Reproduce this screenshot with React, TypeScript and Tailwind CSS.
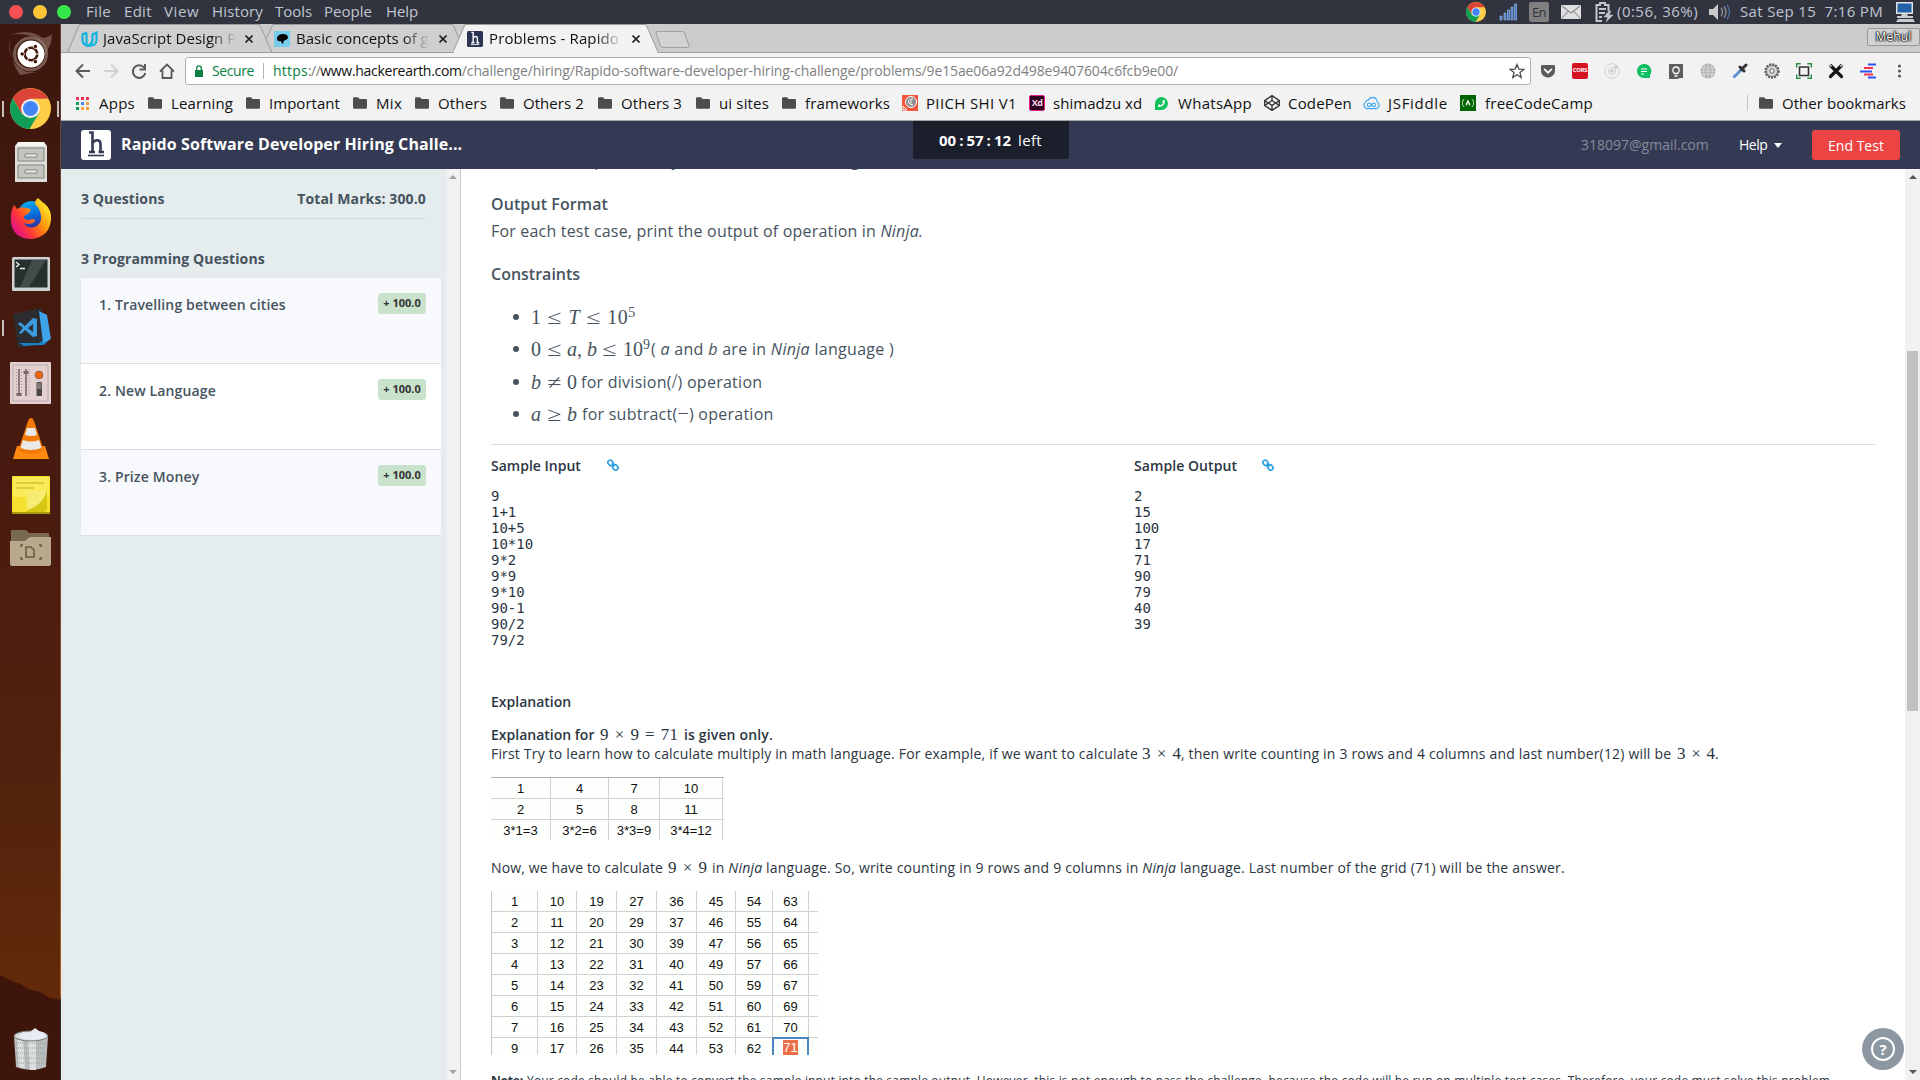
import React from "react";
import { FaGetPocket, FaFreeCodeCamp, FaUbuntu, FaCodepen, FaPhoneAlt } from "react-icons/fa";

function ChromeLogo({ className }: { className: string }) {
  return (
    <svg viewBox="0 0 40 40" className={className}>
      <circle cx="20" cy="20" r="20" fill="#ffcd46" />
      <path d="M2.7 10A20 20 0 0 1 37.3 10.5H20L11.5 25Z" fill="#db4437" />
      <path d="M2.7 10A20 20 0 0 0 19 40L28.5 24.5 20 29 11.5 25Z" fill="#0f9d58" />
      <circle cx="20" cy="20" r="9.2" fill="#f1f1f1" />
      <circle cx="20" cy="20" r="7.3" fill="#4285f4" />
    </svg>
  );
}

function HLogo({ className, bg, fg }: { className: string; bg: string; fg: string }) {
  return (
    <svg viewBox="0 0 30 30" className={className}>
      <rect width="30" height="30" rx="3" fill={bg} />
      <path d="M8 2.5h3.500V21.500M8 22h6M12 12.500c2-3.500 7.500-3 7.500 1.500V21.500M17.500 22h5.500" fill="none" stroke={fg} strokeWidth="2.600" />
      <path d="M7 25.500h16" stroke={fg} strokeWidth="1.600" />
    </svg>
  );
}

function Folder() {
  return (
    <svg viewBox="0 0 14 12" className="h-3 w-3.5">
      <path d="M0 1.500Q0 .3 1.200.3H5L6.600 2H12.800Q14 2 14 3.200V10.500Q14 11.700 12.800 11.700H1.200Q0 11.700 0 10.500Z" fill="#4d4d4d" />
    </svg>
  );
}

const menus: [string, string][] = [
  ["File", "w-[38px] tracking-[0.3px]"],
  ["Edit", "w-[40px] tracking-[0.3px]"],
  ["View", "w-[48px] tracking-[0.6px]"],
  ["History", "w-[63px] tracking-[0.14px]"],
  ["Tools", "w-[49px]"],
  ["People", "w-[62px]"],
  ["Help", "w-[40px] tracking-[-0.1px]"],
];

function MenuBar() {
  return (
    <div className="flex h-6 shrink-0 items-center bg-[#31343f] text-[15px] leading-6 text-[#bfc4d0]">
      <div className="flex w-[86px] shrink-0 gap-[10px] pl-[9px]">
        <i className="size-3.5 rounded-full bg-[#f94f57]" />
        <i className="size-3.5 rounded-full bg-[#fcc436]" />
        <i className="size-3.5 rounded-full bg-[#35e84b]" />
      </div>
      {menus.map(([t, cls]) => (
        <div key={t} className={`${cls} mt-[-2px] shrink-0 whitespace-nowrap`}>{t}</div>
      ))}
      <div className="ml-auto flex items-center">
        <ChromeLogo className="h-5 w-5" />
        <svg viewBox="0 0 18 18" className="ml-[13px] mr-[12px] h-[18px] w-[18px]">
          <path d="M1 13h2v4H1zM5 10h2v7H5zM8.500 7h2v10h-2zM12 4h2v13h-2zM15.500 1h2v16h-2z" fill="#3f78c8" stroke="#a9c6ee" strokeWidth=".6" />
        </svg>
        <span className="flex h-5 w-5 items-center justify-center rounded-[2px] bg-[#808080] text-[13px] tracking-[-0.5px] text-[#31343f]">En</span>
        <svg viewBox="0 0 20 14" className="ml-3 h-[14px] w-5">
          <rect width="20" height="14" rx="1" fill="#e0e0e0" />
          <path d="M1 1l9 7 9-7M1 13l6.500-7M19 13l-6.500-7" fill="none" stroke="#8a8d94" strokeWidth="1.100" />
        </svg>
        <svg viewBox="0 0 20 22" className="ml-[13px] h-[22px] w-5" fill="none" stroke="#c4c6cb" strokeWidth="2">
          <path d="M8 20H2.500V4H6V2h5v2h3.500v6M5 8h7M5 12h6M5 16h3" />
          <path d="M15 10l-5 6h4l-2 5 7-7h-4l2-4z" fill="#c4c6cb" strokeWidth=".5" />
        </svg>
        <span className="ml-[3px] mt-[-2px] w-[92px] whitespace-nowrap tracking-[0.47px]">(0:56, 36%)</span>
        <svg viewBox="0 0 22 18" className="h-[18px] w-[22px]">
          <path d="M0 6h4l5-5v16l-5-5H0z" fill="#c9c9c9" />
          <path d="M12 5q3 4 0 8M15 3.500q4 5.500 0 11" fill="none" stroke="#8e949e" strokeWidth="1.300" />
          <path d="M18 2q5 7 0 14" fill="none" stroke="#4a6da8" strokeWidth="1.300" />
        </svg>
        <span className="ml-[9px] mt-[-2px] w-[155px] whitespace-pre tracking-[0.34px]">Sat Sep 15  7:16 PM</span>
        <svg viewBox="0 0 20 22" className="mr-[5px] h-[22px] w-5">
          <rect x="1" y="1" width="17" height="12" fill="#dfe3e6" />
          <rect x="2.500" y="2.500" width="14" height="9" fill="#2061a8" />
          <path d="M7 13h5l1 2h5v2H2v-2h4zM3 18h15l2 3H1z" fill="#c9cdd0" />
        </svg>
      </div>
    </div>
  );
}

function Wallpaper() {
  return (
    <svg viewBox="0 0 61 1056" className="absolute inset-0 h-full w-full" preserveAspectRatio="none">
      <defs>
        <linearGradient id="wall" x1="0" y1="0" x2="0" y2="1">
          <stop offset="0" stopColor="#3d160d" />
          <stop offset=".5" stopColor="#4b1c10" />
          <stop offset=".75" stopColor="#54230d" />
          <stop offset=".9" stopColor="#62290a" />
        </linearGradient>
        <linearGradient id="edge" x1="0" y1="0" x2="0" y2="1">
          <stop offset="0" stopColor="#5c4039" />
          <stop offset=".6" stopColor="#7d4a30" />
          <stop offset=".92" stopColor="#a8641a" />
          <stop offset=".925" stopColor="#333" />
        </linearGradient>
      </defs>
      <rect width="61" height="1056" fill="url(#wall)" />
      <path d="M0 951l12 6 8 3 8 5 12 3 10 6 11 2v80H0z" fill="#3d150b" />
      <rect x="60" width="1" height="1056" fill="url(#edge)" />
    </svg>
  );
}

function Launcher() {
  return (
    <div className="relative h-[1056px] w-[61px] shrink-0">
      <Wallpaper />
      <div className="relative flex h-full flex-col items-center">
        <div className="mt-[7px] flex h-[45px] w-[45px] items-center justify-center">
          <svg viewBox="0 0 45 45" className="absolute h-[45px] w-[45px]" fill="none">
            <path d="M2 4Q14 1 26 6 38 12 37 24L43 12 44 3Q36 10 30 4 18-2 2 4zM1 8Q0 24 8 34 16 43 30 41L12 44Q2 30 1 8z" fill="#8a6a60" opacity=".7" />
            <circle cx="22.500" cy="23" r="16" stroke="#a08880" strokeWidth="3" opacity=".6" />
          </svg>
          <FaUbuntu className="relative size-7 rounded-full bg-[#431a0f] text-white" />
        </div>
        <div className="mt-[12px] flex w-full items-center justify-between px-[2px]">
          <i className="h-4 w-[2px] bg-[#c8bfbc]" />
          <ChromeLogo className="h-[41px] w-[41px]" />
          <i className="h-4 w-[2px] bg-[#c8bfbc]" />
        </div>
        <svg viewBox="0 0 32 42" className="mt-[12px] h-[42px] w-8">
          <path d="M3 1h26l3 4v36H0V5z" fill="#dcdcd8" />
          <path d="M3 1h26l2 4H1z" fill="#f5f5f3" />
          <path d="M3 7h26v13H3zM3 24h26v13H3z" fill="#c5c5c0" stroke="#85857f" strokeWidth="1" />
          <path d="M10 13h12v3H10zM10 29h12v3H10z" fill="#eee" stroke="#85857f" strokeWidth="1" />
        </svg>
        <svg viewBox="0 0 42 42" className="mt-[15px] h-[42px] w-[42px]">
          <defs>
            <linearGradient id="fox" x1=".1" y1=".8" x2=".9" y2=".2">
              <stop offset="0" stopColor="#e31587" />
              <stop offset=".3" stopColor="#ff3a33" />
              <stop offset=".65" stopColor="#ff9a0b" />
              <stop offset="1" stopColor="#ffe226" />
            </linearGradient>
            <linearGradient id="globe" x1="0" y1="0" x2=".3" y2="1">
              <stop offset="0" stopColor="#06b7f5" />
              <stop offset=".6" stopColor="#0967d8" />
              <stop offset="1" stopColor="#3a2a95" />
            </linearGradient>
          </defs>
          <circle cx="22" cy="18" r="15" fill="url(#globe)" />
          <path d="M4 7l3 4q4-3 9-1l5 1-2 4-5 3q0 4 4 4l6-1q2 2-1 4-5 2-9 0 3 6 10 4 8-2 7-11-1-8-6-12 0-4 3-6 4 4 7 6 7 6 6 16-2 17-19 19Q3 41 1 24 0 14 4 7z" fill="url(#fox)" />
        </svg>
        <svg viewBox="0 0 38 34" className="mt-[17px] h-[34px] w-[38px]">
          <rect width="38" height="34" rx="1.500" fill="#cfd3d3" />
          <rect x="2.500" y="2.500" width="33" height="28" fill="#26302e" />
          <path d="M20 3h14L17 30H8z" fill="#53605d" opacity=".6" />
          <path d="M4 5l3 2.500L4 10M8 11.500h5" fill="none" stroke="#e8ecec" strokeWidth="1.300" />
        </svg>
        <div className="mt-[17px] flex w-full items-center pl-[2px]">
          <i className="h-4 w-[2px] bg-[#c8bfbc]" />
          <svg viewBox="0 0 38 40" className="ml-[9px] h-10 w-[38px]">
            <path d="M0 6l28-6 3 36-26 4z" fill="#2d2d31" />
            <path d="M6 35l20 0 3-2 8-2-6 6q-10 0-20 1z" fill="#1c7fc8" />
            <path d="M26 3l8 4 4 24-8 4z" fill="#3fa3ea" />
            <path d="M7 14l5 4 8-8 4 1v17l-4 1-8-7-4 4-2-1 4-5-5-4zM20 16l-5 4 5 4z" fill="#3c9be0" fillRule="evenodd" />
          </svg>
        </div>
        <svg viewBox="0 0 41 42" className="mt-[14px] h-[42px] w-[41px]">
          <rect width="41" height="42" rx="1" fill="#e3cfd0" />
          <rect x="3" y="3" width="35" height="36" fill="none" stroke="#bfa9ab" />
          <path d="M9 7v27M16 7v27" stroke="#6f6264" strokeWidth="1.500" />
          <path d="M6.500 7v27M11.500 7v27M19 7v27" stroke="#a39394" strokeDasharray="1 2" />
          <path d="M6.500 31h5v3h-5zM13.500 9h5v3h-5z" fill="#77696b" />
          <circle cx="29" cy="13" r="3.800" fill="#f76707" stroke="#8a5a44" />
          <rect x="26.500" y="20" width="5.500" height="14" rx="1" fill="#4c4647" />
          <rect x="27" y="21" width="4.500" height="6" fill="#7f797a" />
        </svg>
        <svg viewBox="0 0 38 42" className="mt-[14px] h-[42px] w-[38px]">
          <path d="M5 28h28l4 13H1z" fill="#ff8a0f" />
          <path d="M19 0q2 0 3 3l10 30q-13 6-26 0L16 3q1-3 3-3z" fill="#f47a08" />
          <path d="M15 10h8l2 7q-6 2-12 0zM11 22q8 3 16 0l2.500 8q-10.500 4-21 0z" fill="#e9e9e9" />
        </svg>
        <svg viewBox="0 0 38 38" className="mt-[16px] h-[38px] w-[38px]">
          <rect width="38" height="38" rx="1" fill="#f5e12d" />
          <rect x="1" y="1" width="36" height="20" fill="#fbf06a" opacity=".7" />
          <path d="M4 7h28M4 12h18" stroke="#cfc13e" strokeWidth="1.500" />
          <path d="M14 36Q22 30 15 16q12 4 20-2v19l-3 3z" fill="#d6c713" />
          <path d="M15 34Q30 30 35 15V15H15z" fill="#f7ec72" />
          <path d="M0 36h38v2H0z" fill="#a89a08" />
        </svg>
        <svg viewBox="0 0 41 37" className="mt-[15px] h-[37px] w-[41px]">
          <path d="M1 1h15l3 3h20v12H1z" fill="#7b6a53" />
          <path d="M0 12h15l5-4h21v27q0 2-2 2H2q-2 0-2-2z" fill="#b9a88c" />
          <path d="M16 18h5l3 3v7h-8zM11 18v-2h2M11 28v2h2M29 16h2v2M29 30h2v-2" fill="none" stroke="#6b5a43" strokeWidth="1.500" />
        </svg>
        <svg viewBox="0 0 36 44" className="mt-auto mb-[9px] h-[44px] w-9">
          <path d="M1 9h34l-2 31q-15 6-30 0z" fill="#b9bcbd" />
          <path d="M4 12h6l2 29-6-1zM15 12h8v31h-6z" fill="#dcdfe0" />
          <path d="M3 16h30M3 21h30M3 26h30M4 31h28M4 36h28" stroke="#8f9394" strokeWidth=".8" strokeDasharray="1 1" />
          <ellipse cx="18" cy="9" rx="17" ry="5" fill="#d9dcdd" stroke="#75797a" />
          <path d="M5 10l5-5 6 1 6-5 4 3 6 2 1 4q-14 6-28 0z" fill="#e6ebf5" />
        </svg>
      </div>
    </div>
  );
}

function Fade({ children }: { children: React.ReactNode }) {
  return (
    <span className="mt-[-2px] w-[134px] shrink-0 overflow-hidden whitespace-nowrap mask-[linear-gradient(to_right,black_80%,transparent)]">
      {children}
    </span>
  );
}

function Close() {
  return (
    <svg viewBox="0 0 8 8" className="h-2 w-2">
      <path d="M.5.5l7 7M7.500.5l-7 7" stroke="#222" strokeWidth="1.600" />
    </svg>
  );
}

function TabStrip() {
  return (
    <div className="relative h-[29px] shrink-0 bg-[#cbcbcb] text-[15px] leading-[28px] text-[#111]">
      <svg viewBox="0 0 1859 29" className="absolute inset-0 h-[29px] w-[1859px]">
        <path d="M0 28.500H1859" stroke="#a0a0a0" />
        <path d="M6.500 28.500L18.500.5H198.500L211.500 28.500z" fill="#cfcfcf" stroke="#9a9a9a" />
        <path d="M205 15L212 .5H392L404 28.500H211z" fill="#cfcfcf" stroke="#9a9a9a" />
        <path d="M391.500 29L404 .5H585L597.500 29z" fill="#f2f2f2" stroke="#9a9a9a" />
        <path d="M393 28.500H596.500" stroke="#f2f2f2" strokeWidth="2" />
        <path d="M595 9q-.5-1.500 1.500-1.500H621q2 0 2.500 1.500l4.500 12.500q.5 2-1.500 2H602q-2 0-2.500-1.500z" fill="#d3d3d3" stroke="#a0a0a0" />
      </svg>
      <div className="relative flex h-7 items-center pt-[2px]">
        <svg viewBox="0 0 17 16" className="ml-5 h-4 w-[17px] shrink-0" fill="none" stroke="#12b5e0" strokeWidth="2.200">
          <path d="M5.500 1.500L1.500 3.500V9q0 3.500 4 5.500V1.500M5.500 14.500q2 .8 4-.6" />
          <path d="M15.500 1.500L11.500 3.500V9q0 3-3.500 5.500 7.500.5 7.500-5.500z" />
        </svg>
        <span className="w-[5px]" />
        <Fade><span className="tracking-[0.05px]">JavaScript Design Pa</span></Fade>
        <span className="w-2" />
        <Close />
        <svg viewBox="0 0 16 16" className="ml-[21px] size-4">
          <rect width="16" height="16" fill="#76cdeb" />
          <path d="M3 7q1-4 6-4 5 0 5 4-1 2-3 2-2 1-2 4-2-1-2-3-4 1-4-3z" fill="#000" />
        </svg>
        <span className="w-[6px]" />
        <Fade>Basic concepts of g</Fade>
        <span className="w-[9px]" />
        <Close />
        <HLogo className="ml-[20px] size-4" bg="#2c3454" fg="#fff" />
        <span className="w-[6px]" />
        <Fade><span className="tracking-[0.12px]">Problems - Rapido</span></Fade>
        <span className="w-[9px]" />
        <Close />
        <span className="ml-auto mt-[-4px] flex h-[18px] w-[53px] items-center justify-center rounded-[2px] border border-[#999] bg-[#d2d2d2] text-[12px] tracking-[0.14px] text-white [text-shadow:0_0_1px_#000,0_0_1px_#000,0_0_2px_#000,0_0_2px_#000]">Mehul</span>
      </div>
    </div>
  );
}

function Toolbar() {
  return (
    <div className="flex h-[35px] shrink-0 items-center">
      <svg viewBox="0 0 102 18" className="ml-[13px] h-[18px] w-[102px]" fill="none" stroke="#5a5a5a" strokeWidth="2">
        <path d="M16 9H3M9 2.500L2.500 9 9 15.500" />
        <path d="M30 9h13M37 2.500L43.500 9 37 15.500" stroke="#d0d0d0" />
        <path d="M70 5.500A6.300 6.300 0 1 0 71.300 11M71 2v5.500h-5.500" />
        <path d="M86 9.500L93 2.500l7 7M88.500 8.500V16h9V8.500" strokeWidth="1.800" />
      </svg>
      <div className="ml-[9px] flex h-7 w-[1346px] shrink-0 items-center rounded-[3px] border border-[#b0b0b0] bg-white text-[14px]">
        <svg viewBox="0 0 8 12" className="ml-[9px] h-3 w-2">
          <path d="M0 5h8v7H0z" fill="#0b8043" />
          <path d="M1.700 5V3q0-2.200 2.300-2.200T6.300 3v2" fill="none" stroke="#0b8043" strokeWidth="1.300" />
        </svg>
        <span className="ml-[9px] w-[51px] tracking-[-0.4px] text-[#0b8043]">Secure</span>
        <i className="mr-[9px] h-4 w-px bg-[#b5b5b5]" />
        <span className="whitespace-nowrap text-[#808080]">
          <span className="tracking-[0.24px] text-[#0b8043]">https</span>
          <span className="tracking-[-0.6px]">://</span>
          <span className="tracking-[-0.28px] text-[#111]">www.hackerearth.com</span>
          <span className="tracking-[-0.12px]">/challenge/hiring/Rapido-software-developer-hiring-challenge/problems/9e15ae06a92d498e9407604c6fcb9e00/</span>
        </span>
        <svg viewBox="0 0 16 16" className="ml-auto mr-[5px] size-4" fill="none" stroke="#4a4a4a" strokeWidth="1.300">
          <path d="M8 1.500l1.900 4.600 4.900.3-3.800 3.200 1.200 4.900L8 11.800l-4.200 2.700L5 9.600 1.200 6.400l4.900-.3z" />
        </svg>
      </div>
      <div className="ml-[9px] flex gap-4">
        <FaGetPocket className="size-4 text-[#5a5a5a]" />
        <span className="flex size-4 items-center justify-center rounded-[2px] bg-[#d5121f] text-[6px] font-bold tracking-[-0.3px] text-white">CORS</span>
        <svg viewBox="0 0 16 16" className="size-4" fill="none" stroke="#d2d2d2">
          <circle cx="8" cy="8" r="7.300" /><circle cx="8" cy="8" r="3.500" /><circle cx="8" cy="8" r="1.500" fill="#ccc" /><circle cx="12" cy="4" r="1.500" fill="#ccc" />
        </svg>
        <svg viewBox="0 0 16 16" className="size-4"><path d="M8 1a7 7 0 0 0 0 14h6V12A7 7 0 0 0 8 1z" fill="#0dbe65" /><path d="M5 6h6M5 8.500h6M5 11h3" stroke="#fff" strokeWidth="1.200" /></svg>
        <svg viewBox="0 0 16 16" className="size-4"><path d="M1 1h14v14h-3l-3 1H1z" fill="#5d5d5d" /><path d="M6.500 10.500Q4.800 9 4.800 7.200a3.200 3.200 0 0 1 6.400 0Q11.200 9 9.500 10.500zM6.500 13h3" fill="none" stroke="#fff" strokeWidth="1.300" /></svg>
        <svg viewBox="0 0 16 16" className="size-4"><circle cx="8" cy="8" r="7.500" fill="#b2b2b2" /><path d="M1 5h14M.5 8h15M1 11h14M8 .5v15M4.500 1.500q-2 6.500 0 13M11.500 1.500q2 6.500 0 13" fill="none" stroke="#dedede" strokeWidth=".8" /></svg>
        <svg viewBox="0 0 16 16" className="size-4"><path d="M1.500 14.500L9 7" stroke="#5b93d6" strokeWidth="3" /><path d="M8 4l4 4M9.500 6.500L14 2" stroke="#333" strokeWidth="3" strokeLinecap="round" /></svg>
        <svg viewBox="0 0 16 16" className="size-4"><circle cx="8" cy="8" r="6.500" fill="#c9c9c9" stroke="#5c5c5c" strokeWidth="2.400" strokeDasharray="2 1" /><circle cx="8" cy="8" r="5.500" fill="#d8d8d8" stroke="#777" /><circle cx="8" cy="8" r="2.200" fill="#f2f2f2" stroke="#666" /></svg>
        <svg viewBox="0 0 16 16" className="size-4" fill="none"><path d="M.7 4.500V.7h4M11.300.7h4v3.800M15.300 11.500v3.800h-4M4.700 15.300h-4v-3.800" stroke="#2a9040" strokeWidth="1.400" /><path d="M3.500 4h9v8.500h-9z" stroke="#333" strokeWidth="1.600" /></svg>
        <svg viewBox="0 0 16 16" className="size-4"><path d="M2.500 2.500l11 11M13.500 2.500l-11 11" stroke="#151515" strokeWidth="3.200" strokeLinecap="round" /><path d="M0 0l3.500 3.500M12.500 3.500L16 0" stroke="#f2f2f2" strokeWidth="1.400" /></svg>
        <svg viewBox="0 0 16 16" className="size-4" strokeWidth="2"><path d="M8 1.500h8M0 8.500h12M8 14.500h8" stroke="#2a54f5" /><path d="M4 5h9M4 11.500h9" stroke="#f5334e" /></svg>
        <svg viewBox="0 0 16 16" className="size-4" fill="#5a5a5a"><circle cx="7.500" cy="3" r="1.600" /><circle cx="7.500" cy="8" r="1.600" /><circle cx="7.500" cy="13" r="1.600" /></svg>
      </div>
    </div>
  );
}

const appDots = ["#f5334e", "#f5334e", "#f5334e", "#0f9d58", "#4285f4", "#fa9d3a", "#0f9d58", "#fa9d3a", "#fa9d3a"];

function AppsIcon() {
  return (
    <svg viewBox="0 0 13 13" className="size-[13px]">
      {appDots.map((c, i) => (
        <rect key={i} x={(i % 3) * 5} y={Math.floor(i / 3) * 5} width="3" height="3" fill={c} />
      ))}
    </svg>
  );
}

const bookmarks: { label: string; w: string; cell: string; icon: React.ReactNode }[] = [
  { label: "Apps", w: "w-[72px] tracking-[0.25px]", cell: "w-[23px]", icon: <AppsIcon /> },
  { label: "Learning", w: "w-[98px] tracking-[0.12px]", cell: "w-[23px]", icon: <Folder /> },
  { label: "Important", w: "w-[107px] tracking-[0.04px]", cell: "w-[23px]", icon: <Folder /> },
  { label: "Mix", w: "w-[62px] tracking-[0.3px]", cell: "w-[23px]", icon: <Folder /> },
  { label: "Others", w: "w-[85px] tracking-[0.18px]", cell: "w-[23px]", icon: <Folder /> },
  { label: "Others 2", w: "w-[98px] tracking-[0.05px]", cell: "w-[23px]", icon: <Folder /> },
  { label: "Others 3", w: "w-[98px] tracking-[0.07px]", cell: "w-[23px]", icon: <Folder /> },
  { label: "ui sites", w: "w-[86px] tracking-[0.16px]", cell: "w-[23px]", icon: <Folder /> },
  { label: "frameworks", w: "w-[120px] tracking-[0.14px]", cell: "w-[23px]", icon: <Folder /> },
  {
    label: "PIICH SHI V1", w: "w-[127px] tracking-[0.35px]", cell: "w-[24px]",
    icon: <svg viewBox="0 0 16 16" className="size-4"><rect width="16" height="16" fill="#f4553d" /><circle cx="9" cy="7" r="5.500" fill="#8b8b8b" stroke="#fff" /><path d="M11 4Q6 4 6.500 7T11 10M9 5.500v3M1 11l4 4H1z" stroke="#fff" fill="none" /></svg>,
  },
  {
    label: "shimadzu xd", w: "w-[125px] tracking-[0.05px]", cell: "w-[24px]",
    icon: <span className="flex size-4 items-center justify-center rounded-[2px] border border-[#e0218a] bg-[#2e001e] text-[9px] font-bold tracking-[-0.5px] text-[#ffd9ec]">Xd</span>,
  },
  {
    label: "WhatsApp", w: "w-[110px] tracking-[0.29px]", cell: "w-[24px]",
    icon: <span className="ml-px flex size-[13px] items-center justify-center rounded-full rounded-bl-[3px] bg-[#12c15a]"><FaPhoneAlt className="size-[7px] -scale-x-100 text-white" /></span>,
  },
  { label: "CodePen", w: "w-[99px] tracking-[0.18px]", cell: "w-[24px]", icon: <FaCodepen className="size-4 text-[#333]" /> },
  {
    label: "JSFiddle", w: "w-[97px] tracking-[0.7px]", cell: "w-[25px]",
    icon: <svg viewBox="0 0 18 14" className="h-[14px] w-[17px]" fill="none" stroke="#3fa9f0" strokeWidth="1.200"><path d="M4 13Q1 12 1 9.500T3 6q0-2 2.500-2Q7 1 10 1q5 .5 5 5 2 1 2 3.500T14 13z" /><path d="M9 9Q7.500 7 6 7.200T4.500 9 6 10.800 9 9q1.500-2 3-1.800T13.500 9 12 10.800 9 9z" /></svg>,
  },
  {
    label: "freeCodeCamp", w: "w-[287px] tracking-[0.25px]", cell: "w-[25px]",
    icon: <span className="flex size-4 items-center justify-center bg-[#006400]"><FaFreeCodeCamp className="size-3 text-white" /></span>,
  },
];

function BookmarkBar() {
  return (
    <div className="flex h-8 shrink-0 items-center pb-[2px] pl-[15px] text-[15px] text-[#111]">
      {bookmarks.map((b) => (
        <div key={b.label} className={`${b.w} flex shrink-0 items-center whitespace-nowrap`}>
          <span className={`${b.cell} shrink-0`}>{b.icon}</span>
          {b.label}
        </div>
      ))}
      <i className="mr-[11px] h-4 w-px bg-[#c5c5c5]" />
      <span className="w-[23px] shrink-0"><Folder /></span>
      <span className="whitespace-nowrap tracking-[0.05px]">Other bookmarks</span>
    </div>
  );
}

function Header() {
  return (
    <div className="flex h-12 shrink-0 items-center bg-[#343a53] pl-5 pr-5">
      <HLogo className="size-[30px]" bg="#fff" fg="#343a53" />
      <span className="ml-[10px] mt-[-2px] w-[792px] whitespace-nowrap text-[16px] font-bold tracking-[0.09px] text-white">Rapido Software Developer Hiring Challe...</span>
      <div className="mb-auto flex h-[38px] w-[156px] shrink-0 items-center rounded-b-[3px] bg-[#1b1e2b] pl-[26px] text-[15px] text-white">
        <span className="w-[79px] font-bold">00<span className="px-[3px]">:</span>57<span className="px-[3px]">:</span>12</span>
        <span className="tracking-[0.35px]">left</span>
      </div>
      <span className="ml-auto mt-[-1px] w-[158px] text-[14px] text-[#868b98]">318097@gmail.com</span>
      <span className="mt-[-1px] w-[35px] text-[14px] tracking-[-0.5px] text-white">Help</span>
      <i className="mr-[30px] border-x-[4px] border-t-[5px] border-x-transparent border-t-white" />
      <span className="flex h-[30px] w-[88px] shrink-0 items-center justify-center rounded-[3px] bg-[#eb4443] text-[14px] text-white">End Test</span>
    </div>
  );
}

const questions: [string, string][] = [
  ["1. Travelling between cities", "bg-[#f8f9fc]"],
  ["2. New Language", "bg-white"],
  ["3. Prize Money", "bg-[#f8f9fc]"],
];

function Sidebar() {
  return (
    <div className="flex w-[400px] shrink-0 border-r border-[#c9ccce] bg-[#e4ecee]">
      <div className="w-[385px] pl-5 text-[14px] font-bold text-[#46535e]">
        <div className="mr-5 flex h-[50px] items-center justify-between border-b border-[#d3dadd] pt-[10px]">
          <span className="tracking-[0.1px]">3 Questions</span>
          <span className="tracking-[0.12px]">Total Marks: 300.0</span>
        </div>
        <div className="mb-[9px] mt-[30px] h-5 leading-5 tracking-[0.1px]">3 Programming Questions</div>
        {questions.map(([q, bg]) => (
          <div key={q} className={`${bg} mr-[5px] flex h-[86px] items-start justify-between border-b border-[#dcdfe2] pl-[18px] pr-[15px] pt-[15px]`}>
            <span className="mt-[2px] font-semibold leading-5 tracking-[0.14px]">{q}</span>
            <span className="flex h-[21px] w-12 items-center justify-center rounded-[3px] bg-[#c8e2cc] text-[11px] font-bold text-[#333]">+ 100.0</span>
          </div>
        ))}
      </div>
      <div className="flex w-[14px] flex-col items-center justify-between bg-[#f1f1f1] py-[6px]">
        <i className="border-x-[4px] border-b-[4px] border-x-transparent border-b-[#a3a3a3]" />
        <i className="border-x-[4px] border-t-[4px] border-x-transparent border-t-[#a3a3a3]" />
      </div>
    </div>
  );
}

function M({ children, className = "" }: { children: React.ReactNode; className?: string }) {
  return <span className={`font-['Liberation_Serif',serif] ${className}`}>{children}</span>;
}

const smallRows = [["1", "4", "7", "10"], ["2", "5", "8", "11"], ["3*1=3", "3*2=6", "3*3=9", "3*4=12"]];
const gridRows = [
  [1, 10, 19, 27, 36, 45, 54, 63],
  [2, 11, 20, 29, 37, 46, 55, 64],
  [3, 12, 21, 30, 39, 47, 56, 65],
  [4, 13, 22, 31, 40, 49, 57, 66],
  [5, 14, 23, 32, 41, 50, 59, 67],
  [6, 15, 24, 33, 42, 51, 60, 69],
  [7, 16, 25, 34, 43, 52, 61, 70],
  [9, 17, 26, 35, 44, 53, 62, 71],
];

function LinkIcon() {
  return (
    <svg viewBox="0 0 12 12" className="size-3" fill="none" stroke="#2a9fe0" strokeWidth="1.600">
      <rect x="1" y="1" width="4.600" height="5.600" rx="2.200" transform="rotate(-40 3.500 3.500)" />
      <rect x="6.200" y="5.600" width="4.600" height="5.600" rx="2.200" transform="rotate(-40 8.500 8.500)" />
      <path d="M4.500 4.500l3 3" />
    </svg>
  );
}

function Row({ children }: { children: React.ReactNode }) {
  return (
    <div className="flex h-[32.25px] items-center whitespace-pre pl-[22px]">
      <i className="mr-[12px] size-1.5 shrink-0 rounded-full bg-[#46535e]" />
      {children}
    </div>
  );
}

// relation sign, set wider than the font's own glyph
function Rel({ children }: { children: string }) {
  return <span className="mx-[2.5px] inline-block scale-x-[1.3]">{children}</span>;
}

function Main() {
  return (
    <div className="flex min-w-0 flex-1 overflow-hidden bg-white">
      <div className="h-[911px] min-w-0 flex-1 overflow-hidden pl-[30px] pr-[29px] text-[#2b353f]">
        <div className="text-[16px] leading-[22px] text-[#46535e]">
          <div className="-mt-[20px] h-[22px] whitespace-pre">T lines of an operation by a contestant on a string</div>
          <div className="mt-[22px] font-semibold tracking-[0.09px]">Output Format</div>
          <div className="mt-[5px] tracking-[0.19px]">For each test case, print the output of operation in <em>Ninja.</em></div>
          <div className="mt-[21px] font-semibold">Constraints</div>
          <div className="mt-[16px]">
            <Row><M className="w-[103px] text-[20px] tracking-[0.4px]">1 <Rel>≤</Rel> <em>T</em> <Rel>≤</Rel> 10<sup className="text-[14px]">5</sup></M></Row>
            <Row><M className="mr-[2px] w-[118px] text-[20px]">0 <Rel>≤</Rel> <em>a</em>, <em>b</em> <Rel>≤</Rel> 10<sup className="text-[14px]">9</sup></M><span className="tracking-[0.3px]">( <em>a</em> and <em>b</em> are in <em>Ninja</em> language )</span></Row>
            <Row><M className="w-[50px] text-[20px]"><em>b</em> <Rel>≠</Rel> 0</M><span className="tracking-[0.26px]">for division(<M className="text-[20px] leading-none">/</M>) operation</span></Row>
            <Row><M className="w-[51px] text-[20px]"><em>a</em> <Rel>≥</Rel> <em>b</em></M><span className="tracking-[0.25px]">for subtract(<M className="text-[20px] leading-none">−</M>) operation</span></Row>
          </div>
        </div>
        <div className="mt-[14px] border-t border-[#dddddd]" />
        <div className="mt-[10px] flex text-[14px]">
          <div className="w-[643px]">
            <div className="flex h-5 items-center font-semibold"><span className="w-[116px]">Sample Input</span><LinkIcon /></div>
            <pre className="mt-[13px] h-[160px] font-['DejaVu_Sans_Mono',monospace] text-[14px] leading-4">{"9\n1+1\n10+5\n10*10\n9*2\n9*9\n9*10\n90-1\n90/2\n79/2"}</pre>
          </div>
          <div>
            <div className="flex h-5 items-center font-semibold"><span className="w-[128px] tracking-[0.07px]">Sample Output</span><LinkIcon /></div>
            <pre className="mt-[13px] font-['DejaVu_Sans_Mono',monospace] text-[14px] leading-4">{"2\n15\n100\n17\n71\n90\n79\n40\n39"}</pre>
          </div>
        </div>
        <div className="text-[14px] leading-[19px]">
          <div className="mt-[44px] font-semibold">Explanation</div>
          <div className="mt-[14px] flex h-[19px] whitespace-pre font-semibold"><span className="w-[109px]">Explanation for</span><M className="w-[84px] text-[17px] font-normal tracking-[0.2px] [word-spacing:1.5px]">9 × 9 = 71</M><span className="tracking-[0.15px]">is given only.</span></div>
          <div className="flex h-[19px] whitespace-pre"><span className="w-[651px] tracking-[0.18px]">First Try to learn how to calculate multiply in math language. For example, if we want to calculate</span><M className="w-[39px] text-[17px] tracking-[0.2px] [word-spacing:1.5px]">3 × 4</M><span className="w-[496px] tracking-[0.18px]">, then write counting in 3 rows and 4 columns and last number(12) will be</span><M className="w-[38px] text-[17px] [word-spacing:1.5px]">3 × 4</M>.</div>
        </div>
        <div className="mt-[14px] h-[63px] w-[233px] overflow-hidden border-t border-[#b0b0b0] bg-[#fdfffc] font-['Liberation_Sans',sans-serif] text-[13px] text-[#111]">
          {smallRows.map((r) => (
            <div key={r[0]} className="grid h-[21px] grid-cols-[60px_58px_51px_63px] border-b border-[#d0d0d0]">
              {r.map((c) => (
                <span key={c} className="flex items-center justify-center border-r border-[#d0d0d0] pt-px">{c}</span>
              ))}
            </div>
          ))}
        </div>
        <div className="mt-[18px] flex h-5 whitespace-pre text-[14px] leading-5"><span className="w-[177px] tracking-[0.13px]">Now, we have to calculate</span><M className="w-[44px] text-[17px] tracking-[0.2px] [word-spacing:1.5px]">9 × 9</M><span className="tracking-[0.2px]">in <em>Ninja</em> language. So, write counting in 9 rows and 9 columns in <em>Ninja</em> language. Last number of the grid (71) will be the answer.</span></div>
        <div className="mt-[13px] h-[164px] w-[327px] overflow-hidden border-l border-[#c4c4c4] bg-[#fcfffb] font-['Liberation_Sans',sans-serif] text-[13px] text-[#111]">
          {gridRows.map((r) => (
            <div key={r[0]} className="grid h-[21px] grid-cols-[46px_39px_40px_40px_40px_39px_37px_36px_9px] border-b border-[#d0d0d0]">
              {r.map((c) => (
                <span key={c} className={c === 71 ? "-ml-px -mt-px flex items-start justify-center border-2 border-b-0 border-[#4a86c0]" : "flex items-center justify-center border-r border-[#d0d0d0] pt-px"}>
                  {c === 71 ? <span className="mt-px bg-[#ec6f48] leading-[15px] text-white">71</span> : c}
                </span>
              ))}
            </div>
          ))}
        </div>
        <div className="mt-[16px] flex h-5 whitespace-pre text-[12px] leading-5"><b className="w-9 tracking-[-0.2px]">Note:</b><span className="tracking-[0.17px]">Your code should be able to convert the sample input into the sample output. However, this is not enough to pass the challenge, because the code will be run on multiple test cases. Therefore, your code must solve this problem</span></div>
      </div>
      <div className="flex w-[15px] shrink-0 flex-col items-center bg-[#f1f1f1] py-[6px]">
        <i className="border-x-[4px] border-b-[4px] border-x-transparent border-b-[#555]" />
        <i className="mt-[172px] h-[360px] w-[11px] bg-[#c1c1c1]" />
        <i className="mt-auto border-x-[4px] border-t-[4px] border-x-transparent border-t-[#555]" />
      </div>
    </div>
  );
}

export default function App() {
  return (
    <div className="relative flex h-[1080px] w-[1920px] flex-col overflow-hidden font-['Open_Sans','Noto_Sans',sans-serif]">
      <MenuBar />
      <div className="flex">
        <Launcher />
        <div className="flex h-[1056px] min-w-0 flex-1 flex-col">
          <TabStrip />
          <div className="flex h-[68px] shrink-0 flex-col border-b border-[#a5a5a5] bg-[#f2f2f2]">
            <Toolbar />
            <BookmarkBar />
          </div>
          <Header />
          <div className="flex h-[911px]">
            <Sidebar />
            <Main />
          </div>
        </div>
      </div>
      <div className="absolute bottom-[10px] right-4 flex size-[42px] items-center justify-center rounded-full bg-[#8c97a1]">
        <span className="flex size-6 items-center justify-center rounded-full border-2 border-white text-[15px] font-bold text-white">?</span>
      </div>
    </div>
  );
}
